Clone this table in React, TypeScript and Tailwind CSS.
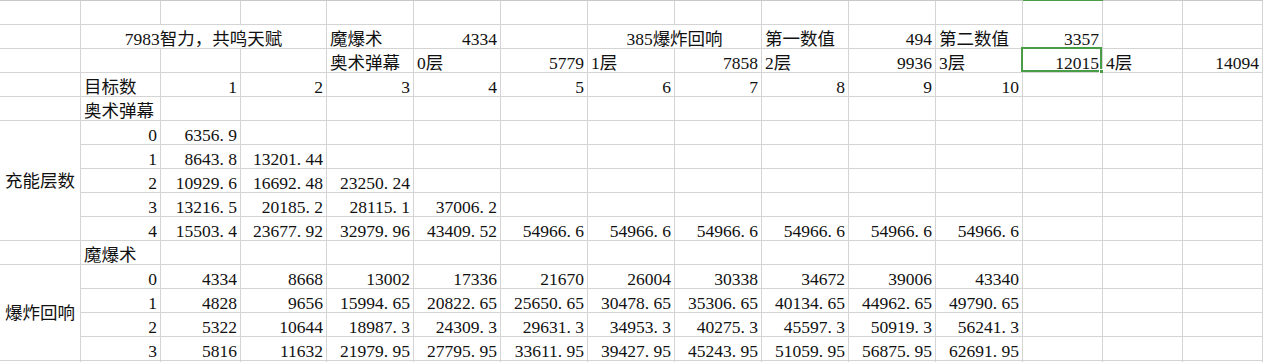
import React from 'react';

type Cell = string | { t: string; a?: 'l' | 'r' | 'c'; span?: 2 | 3; rspan?: 4 | 5; sel?: boolean };

const COLS =
    'grid grid-cols-[81px_80px_80px_86px_87px_87px_87px_87px_87px_87px_87px_87px_80px_80px_80px]';

const empty = (n: number): Cell[] => Array(n).fill('');

const rows: Cell[][] = [
    empty(15),
    [
        '',
        { t: '7983智力，共鸣天赋', a: 'c', span: 3 },
        '魔爆术',
        '4334',
        '',
        { t: '385爆炸回响', a: 'c', span: 2 },
        '第一数值',
        '494',
        '第二数值',
        '3357',
        '',
        '',
    ],
    ['', '', '', '', '奥术弹幕', '0层', '5779', '1层', '7858', '2层', '9936', '3层', { t: '12015', sel: true }, '4层', '14094'],
    ['', '目标数', '1', '2', '3', '4', '5', '6', '7', '8', '9', '10', '', '', ''],
    ['', '奥术弹幕', ...empty(13)],
    [{ t: '充能层数', a: 'c', rspan: 5 }, '0', '6356.9', ...empty(12)],
    ['1', '8643.8', '13201.44', ...empty(11)],
    ['2', '10929.6', '16692.48', '23250.24', ...empty(10)],
    ['3', '13216.5', '20185.2', '28115.1', '37006.2', ...empty(9)],
    ['4', '15503.4', '23677.92', '32979.96', '43409.52', '54966.6', '54966.6', '54966.6', '54966.6', '54966.6', '54966.6', ...empty(3)],
    ['', '魔爆术', ...empty(13)],
    [{ t: '爆炸回响', a: 'c', rspan: 4 }, '0', '4334', '8668', '13002', '17336', '21670', '26004', '30338', '34672', '39006', '43340', ...empty(3)],
    ['1', '4828', '9656', '15994.65', '20822.65', '25650.65', '30478.65', '35306.65', '40134.65', '44962.65', '49790.65', ...empty(3)],
    ['2', '5322', '10644', '18987.3', '24309.3', '29631.3', '34953.3', '40275.3', '45597.3', '50919.3', '56241.3', ...empty(3)],
    ['3', '5816', '11632', '21979.95', '27795.95', '33611.95', '39427.95', '45243.95', '51059.95', '56875.95', '62691.95', ...empty(3)],
    empty(15),
];

const Value = ({ v }: { v: string }) => {
    if (!/^\d+\.\d+$/.test(v)) return <>{v}</>;
    const [i, f] = v.split('.');
    return (
        <>
            {i}
            <span className="inline-block w-[0.5em]">.</span>
            {f}
        </>
    );
};

const SheetCell: React.FC<{ cell: Cell }> = ({ cell }) => {
    const c = typeof cell === 'string' ? { t: cell } : cell;
    const align = c.a ?? (/^[\d.]+$/.test(c.t) ? 'r' : 'l');
    return (
        <div
            className={[
                'relative flex border-r border-b border-[#d4d4d4] px-[3px] leading-[18px] whitespace-nowrap',
                c.rspan ? 'items-center' : 'items-end',
                align === 'r' ? 'justify-end' : align === 'c' ? 'justify-center' : 'justify-start',
                c.span === 3 ? 'col-span-3' : c.span === 2 ? 'col-span-2' : '',
                c.rspan === 5 ? 'row-span-5' : c.rspan === 4 ? 'row-span-4' : '',
            ].join(' ')}
        >
            <Value v={c.t} />
            {c.sel && (
                <>
                    <div className="absolute -left-[2px] -top-[2px] right-0 bottom-0 border-2 border-[#4a9d47]" />
                    <div className="absolute -right-[2px] -bottom-[2px] h-[5px] w-[5px] border border-white bg-[#4a9d47]" />
                </>
            )}
        </div>
    );
};

const App: React.FC = () => (
    <div
        className="h-[362px] w-[1263px] overflow-hidden bg-white text-[17.5px] text-[#111]"
        style={{ fontFamily: '"Liberation Serif", "Noto Sans CJK SC", serif' }}
    >
        <div className={`${COLS} h-px`}>
            {Array.from({ length: 15 }, (_, i) => (
                <div key={i} className={i === 12 ? 'bg-[#4a9d47]' : 'bg-[#c8c8c8]'} />
            ))}
        </div>
        <div className={`${COLS} auto-rows-[24px]`}>
            {rows.flatMap((row, r) => row.map((cell, i) => <SheetCell key={`${r}-${i}`} cell={cell} />))}
        </div>
    </div>
);

export default App;
